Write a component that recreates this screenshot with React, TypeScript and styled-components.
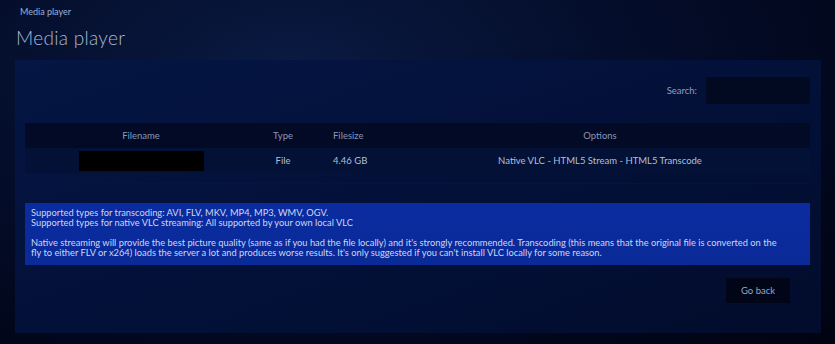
import React from 'react';
import styled, { createGlobalStyle } from 'styled-components';

const GlobalStyle = createGlobalStyle`
  html, body {
    margin: 0;
    padding: 0;
    height: 100%;
  }
  body {
    background: radial-gradient(ellipse at 35% 20%, #0a1a42 0%, #040d2a 45%, #01061a 80%, #000310 100%);
    font-family: Lato, "Open Sans", sans-serif;
    color: #b4c0da;
  }
`;

const Page = styled.div`
  width: 835px;
  height: 344px;
  box-sizing: border-box;
  padding: 6px 14px 0 15px;
  display: flex;
  flex-direction: column;
`;

const Crumb = styled.div`
  font-size: 9px;
  color: #9fb0d2;
  padding-left: 5px;
  line-height: 11px;
`;

const Title = styled.h1`
  margin: 10px 0 0 1px;
  font-size: 19px;
  font-weight: 300;
  color: #a9b8d8;
  line-height: 22px;
  letter-spacing: 0.3px;
`;

const Panel = styled.div`
  margin-top: 11px;
  height: 273px;
  box-sizing: border-box;
  background: linear-gradient(160deg, #051644 0%, #03113a 45%, #020c2c 100%);
  padding: 17px 11px 0 10px;
  display: flex;
  flex-direction: column;
`;

const SearchRow = styled.div`
  display: flex;
  justify-content: flex-end;
  align-items: center;
  gap: 9px;
  font-size: 9.5px;
  color: #8f9fc2;
`;

const SearchInput = styled.div`
  width: 104px;
  height: 27px;
  background: #020a22;
`;

const Table = styled.div`
  margin-top: 19px;
  display: grid;
  grid-template-columns: 232px 52px 81px 1fr;
  font-size: 9.5px;
`;

const HeadCell = styled.div<{ left?: boolean }>`
  height: 25px;
  background: #020a25;
  display: flex;
  align-items: center;
  justify-content: ${(p) => (p.left ? 'flex-start' : 'center')};
  padding-left: ${(p) => (p.left ? '24px' : '0')};
  color: #8797bb;
`;

const Cell = styled.div<{ left?: boolean }>`
  height: 25px;
  background: #031136;
  display: flex;
  align-items: center;
  justify-content: ${(p) => (p.left ? 'flex-start' : 'center')};
  padding-left: ${(p) => (p.left ? '24px' : '0')};
  color: #b3bfda;
  font-weight: 400;
`;

const Redacted = styled.div`
  width: 125px;
  height: 20px;
  background: #000;
`;

const Divider = styled.div`
  margin-top: 10px;
  height: 1px;
  background: #05184280;
`;

const Info = styled.div`
  margin-top: 19px;
  background: linear-gradient(180deg, #0b2c9f 0%, #0a2a98 100%);
  padding: 5px 24px 7px 6px;
  font-size: 9.3px;
  line-height: 10px;
  color: #cdd7f2;
`;

const Para = styled.p`
  margin: 0;
  & + & {
    margin-top: 10px;
  }
`;

const Footer = styled.div`
  display: flex;
  justify-content: flex-end;
  padding-right: 20px;
  margin-top: 13px;
`;

const Button = styled.button`
  width: 64px;
  height: 25px;
  border: none;
  background: #010518;
  color: #97a6c6;
  font-family: Lato, "Open Sans", sans-serif;
  font-size: 9.5px;
  padding: 0;
`;

export default function App() {
  return (
    <>
      <GlobalStyle />
      <Page>
        <Crumb>Media player</Crumb>
        <Title>Media player</Title>
        <Panel>
          <SearchRow>
            <span>Search:</span>
            <SearchInput />
          </SearchRow>
          <Table>
            <HeadCell>Filename</HeadCell>
            <HeadCell>Type</HeadCell>
            <HeadCell left>Filesize</HeadCell>
            <HeadCell>Options</HeadCell>
            <Cell><Redacted /></Cell>
            <Cell>File</Cell>
            <Cell left>4.46 GB</Cell>
            <Cell>Native VLC - HTML5 Stream - HTML5 Transcode</Cell>
          </Table>
          <Divider />
          <Info>
            <Para>
              Supported types for transcoding: AVI, FLV, MKV, MP4, MP3, WMV, OGV.<br />
              Supported types for native VLC streaming: All supported by your own local VLC
            </Para>
            <Para>
              Native streaming will provide the best picture quality (same as if you had the file locally) and it's strongly recommended. Transcoding (this means that the original file is converted on the fly to either FLV or x264) loads the server a lot and produces worse results. It's only suggested if you can't install VLC locally for some reason.
            </Para>
          </Info>
          <Footer>
            <Button>Go back</Button>
          </Footer>
        </Panel>
      </Page>
    </>
  );
}
